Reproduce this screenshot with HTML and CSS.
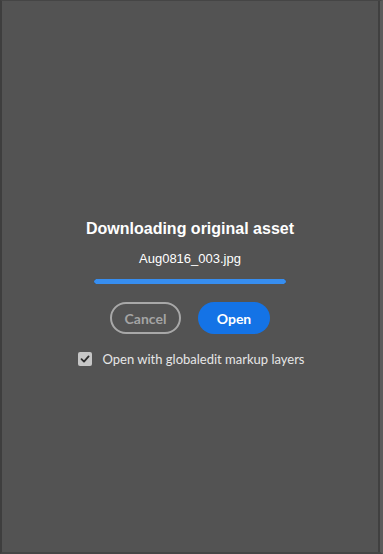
FILE: index.html
```html
<!DOCTYPE html>
<html>
<head>
<meta charset="utf-8">
<link rel="stylesheet" href="styles.css">
</head>
<body>
<div class="frame">
  <div class="panel">
    <div class="dialog">
      <h1 class="title">Downloading original asset</h1>
      <div class="filename">Aug0816_003.jpg</div>
      <div class="progress"><div class="progress-fill" style="width:100%"></div></div>
      <div class="buttons">
        <button class="btn btn-cancel">Cancel</button>
        <button class="btn btn-open">Open</button>
      </div>
      <label class="check">
        <span class="box">
          <svg width="10" height="10" viewBox="0 0 10 10"><path d="M1.5 5.2 L4 7.6 L8.6 2.4" fill="none" stroke="#2b2b2b" stroke-width="1.8" stroke-linecap="round" stroke-linejoin="round"/></svg>
        </span>
        <span class="check-label">Open with globaledit markup layers</span>
      </label>
    </div>
  </div>
</div>
</body>
</html>
```

FILE: styles.css
```css
html, body {
  margin: 0;
  padding: 0;
  width: 383px;
  height: 554px;
  background: #535353;
  overflow: hidden;
}
.frame {
  width: 383px;
  height: 554px;
  box-sizing: border-box;
  border-left: 2px solid #3e3e3e;
  border-top: 1px solid #454545;
  border-bottom: 2px solid #464646;
  border-right: 3px solid #5b5b5b;
  display: flex;
}
.panel {
  flex: 1;
  border-right: 2px solid #404040;
  display: flex;
  justify-content: center;
}
.dialog {
  display: flex;
  flex-direction: column;
  align-items: center;
  padding-top: 218px;
  width: 100%;
}
.title {
  margin: 0;
  font-family: "Liberation Sans", Arial, sans-serif;
  font-weight: bold;
  font-size: 16px;
  line-height: 20px;
  color: #ffffff;
}
.filename {
  margin-top: 12px;
  font-family: "Liberation Sans", Arial, sans-serif;
  font-size: 13px;
  line-height: 16px;
  color: #ffffff;
}
.progress {
  margin-top: 12px;
  width: 192px;
  height: 5px;
  border-radius: 3px;
  background: #3a3a3a;
  overflow: hidden;
}
.progress-fill {
  height: 100%;
  background: #378ef0;
  border-radius: 3px;
}
.buttons {
  margin-top: 18px;
  display: flex;
  gap: 17px;
}
.btn {
  height: 32px;
  border-radius: 16px;
  font-family: Lato, "Open Sans", sans-serif;
  font-weight: bold;
  font-size: 14px;
  padding: 0;
  box-sizing: border-box;
}
.btn-cancel {
  width: 71px;
  background: transparent;
  border: 2px solid #a8a8a8;
  color: #a4a4a4;
}
.btn-open {
  width: 72px;
  background: #1473e6;
  border: none;
  color: #ffffff;
}
.check {
  margin-top: 17px;
  display: flex;
  align-items: center;
  gap: 10px;
  margin-left: 3px;
}
.box {
  width: 14px;
  height: 14px;
  border-radius: 2px;
  background: #c6c6c6;
  display: flex;
  align-items: center;
  justify-content: center;
}
.check-label {
  font-family: Lato, "Open Sans", sans-serif;
  font-size: 13px;
  color: #e6e6e6;
}
```
